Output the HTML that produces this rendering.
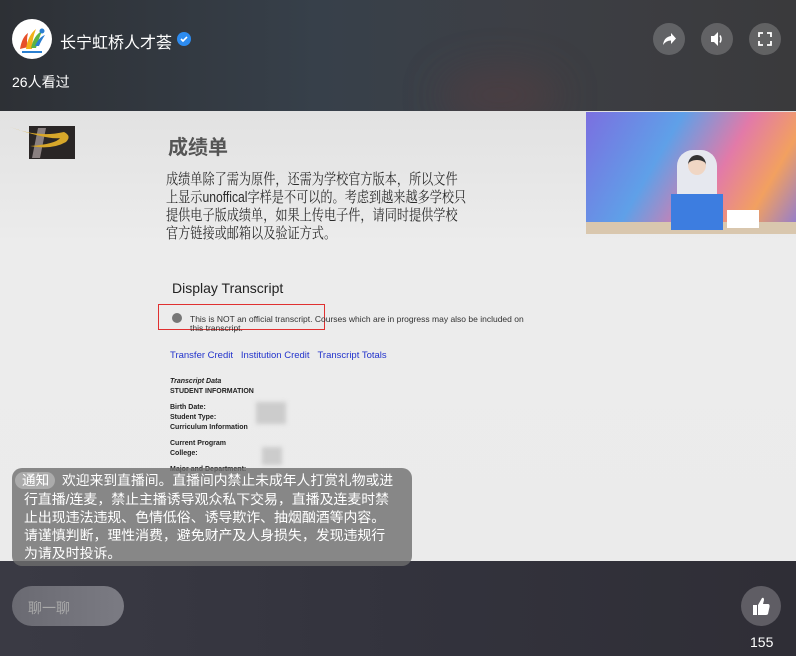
<!DOCTYPE html>
<html><head><meta charset="utf-8"><style>
*{margin:0;padding:0;box-sizing:border-box}
body{width:796px;height:656px;overflow:hidden;position:relative;font-family:"Liberation Sans","Noto Sans CJK SC",sans-serif;background:#2f2f37}
.top{position:absolute;left:0;top:0;width:796px;height:111px;background:linear-gradient(90deg,#2d3035 0%,#37404a 40%,#3d3f45 65%,#3a3a3c 100%)}
.glow{position:absolute;left:440px;top:70px;width:120px;height:50px;border-radius:50%;background:rgba(110,60,60,.3);filter:blur(20px)}
.bot{position:absolute;left:0;top:561px;width:796px;height:95px;background:linear-gradient(90deg,#3a3a44,#33333d 50%,#2f2e36)}
.slide{position:absolute;left:0;top:111px;width:796px;height:450px;background:linear-gradient(#e2e2e2,#ececec 30%,#ebebeb)}
.circ{position:absolute;width:32px;height:32px;border-radius:50%;background:rgba(255,255,255,.2)}
.t{position:absolute;white-space:nowrap}
</style></head><body>
<div class="top"><div class="glow"></div></div>
<div style="position:absolute;left:12px;top:19px;width:40px;height:40px;border-radius:50%;background:#fff;overflow:hidden">
<svg width="40" height="40"><path d="M8 30 Q10 18 16 14 Q14 22 16 28Z" fill="#e7502a"/><path d="M14 30 Q16 16 24 10 Q20 20 20 30Z" fill="#f2b21a"/><path d="M19 29 Q22 16 30 12 Q26 22 24 29Z" fill="#5bb344"/><path d="M23 27 Q27 18 33 16 Q29 22 27 27Z" fill="#2a7fd0"/><circle cx="30" cy="12" r="2.5" fill="#2a7fd0"/><rect x="10" y="32" width="20" height="2" fill="#2a7fd0"/></svg></div>
<div class="t" style="left:60px;top:29px;color:#fff;font-size:16px">长宁虹桥人才荟</div>
<svg style="position:absolute;left:177px;top:32px" width="14" height="14"><circle cx="7" cy="7" r="7" fill="#2d8cf0"/><path d="M4 7l2 2 4-4" stroke="#fff" stroke-width="1.6" fill="none"/></svg>
<div class="t" style="left:12px;top:72px;color:#fff;font-size:14px">26人看过</div>
<div class="circ" style="left:653px;top:23px"></div>
<svg style="position:absolute;left:653px;top:23px" width="32" height="32"><path d="M10 22 Q11 14 18 13 V10 L23 15.5 L18 21 V17.5 Q13 17.5 10 22Z" fill="#fff"/></svg>
<div class="circ" style="left:701px;top:23px"></div>
<svg style="position:absolute;left:701px;top:23px" width="32" height="32"><path d="M10 13h3l4-4v14l-4-4h-3z" fill="#fff"/><path d="M19 12.5q2 3.5 0 7" stroke="#fff" stroke-width="1.5" fill="none"/></svg>
<div class="circ" style="left:749px;top:23px"></div>
<svg style="position:absolute;left:749px;top:23px" width="32" height="32" stroke="#fff" stroke-width="1.8" fill="none"><path d="M10 14v-4h4M18 10h4v4M22 18v4h-4M14 22h-4v-4"/></svg>
<div class="slide"></div>
<div class="bot"></div>
<svg style="position:absolute;left:8px;top:124px" width="72" height="38"><rect x="21" y="2" width="46" height="33" fill="#2a2626"/><path d="M30 4 L38 4 L32 34 L24 34Z" fill="#8a8080"/><path d="M2 3 Q30 14 56 8 Q64 12 58 18 Q44 26 22 22 Q48 20 52 14 Q40 16 2 3Z" fill="#d7a72a"/></svg>
<div class="t" style="left:168px;top:131px;font-size:20px;font-weight:bold;color:#555">成绩单</div>
<div class="t" style="left:166px;top:171px;font-family:'Liberation Serif','Noto Serif CJK SC',serif;font-size:15px;line-height:18px;color:#2a2a2a;transform:scaleX(0.81);transform-origin:0 0">成绩单除了需为原件，还需为学校官方版本，所以文件<br>上显示<span style="font-family:'Liberation Sans',sans-serif">unoffical</span>字样是不可以的。考虑到越来越多学校只<br>提供电子版成绩单，如果上传电子件，请同时提供学校<br>官方链接或邮箱以及验证方式。</div>
<div class="t" style="left:172px;top:280px;font-size:14px;color:#222">Display Transcript</div>
<div style="position:absolute;left:158px;top:304px;width:167px;height:26px;border:1.5px solid #e03030"></div>
<div style="position:absolute;left:172px;top:313px;width:10px;height:10px;border-radius:50%;background:#777"></div>
<div class="t" style="left:190px;top:314px;font-size:8.5px;color:#333">This is NOT an official transcript. Courses which are in progress may also be included on</div>
<div class="t" style="left:190px;top:323px;font-size:8.5px;color:#333">this transcript.</div>
<div class="t" style="left:170px;top:350px;font-size:9.5px;color:#2233cc">Transfer Credit&nbsp;&nbsp;&nbsp;Institution Credit&nbsp;&nbsp;&nbsp;Transcript Totals</div>
<div style="position:absolute;left:170px;top:377px;font-size:7px;font-weight:bold;color:#222;line-height:10px">
<i>Transcript Data</i><br>STUDENT INFORMATION<br><div style="height:6px"></div>Birth Date:<br>Student Type:<br>Curriculum Information<br><div style="height:6px"></div>Current Program<br>College:<br><div style="height:6px"></div>Major and Department:</div>
<div style="position:absolute;left:256px;top:402px;width:30px;height:22px;background:#ccc;filter:blur(2px)"></div>
<div style="position:absolute;left:262px;top:447px;width:20px;height:18px;background:#ccc;filter:blur(2px)"></div>
<div style="position:absolute;left:586px;top:112px;width:210px;height:122px;background:linear-gradient(120deg,#7b6fe0,#5fa0e8 35%,#e27aa8 60%,#f2a060 80%,#8a7ad8)"></div>
<div style="position:absolute;left:586px;top:222px;width:210px;height:12px;background:#d9c7ae"></div>
<div style="position:absolute;left:677px;top:150px;width:40px;height:50px;border-radius:16px 16px 4px 4px;background:#e6e8ef"></div>
<div style="position:absolute;left:688px;top:155px;width:18px;height:20px;border-radius:50%;background:#f0d6c4;border-top:5px solid #333"></div>
<div style="position:absolute;left:671px;top:194px;width:52px;height:36px;background:#3d7de0"></div>
<div style="position:absolute;left:727px;top:210px;width:32px;height:18px;background:#fff"></div>
<div style="position:absolute;left:12px;top:468px;width:400px;height:98px;border-radius:10px;background:rgba(110,110,110,.8)"></div>
<div style="position:absolute;left:15px;top:472px;width:40px;height:17px;border-radius:9px;background:rgba(255,255,255,.3)"></div>
<div class="t" style="left:22px;top:472px;font-size:13.6px;line-height:18px;color:#fff">通知</div>
<div class="t" style="left:62px;top:472px;font-size:13.8px;line-height:18px;color:#fff">欢迎来到直播间。直播间内禁止未成年人打赏礼物或进</div>
<div class="t" style="left:24px;top:490px;font-size:13.9px;line-height:18px;color:#fff">行直播/连麦，禁止主播诱导观众私下交易，直播及连麦时禁<br>止出现违法违规、色情低俗、诱导欺诈、抽烟酗酒等内容。<br>请谨慎判断，理性消费，避免财产及人身损失，发现违规行<br>为请及时投诉。</div>
<div style="position:absolute;left:12px;top:586px;width:112px;height:40px;border-radius:20px;background:linear-gradient(90deg,#6a6a72,#7b7b83)"></div>
<div class="t" style="left:28px;top:598px;font-size:14px;color:#aaa">聊一聊</div>
<div style="position:absolute;left:741px;top:586px;width:40px;height:40px;border-radius:50%;background:#5f5d64"></div>
<svg style="position:absolute;left:741px;top:586px" width="40" height="40"><rect x="12" y="19" width="4" height="10" fill="#fff"/><path d="M17 19 L21 12 Q23 11 23 14 L22 18 H27 Q29 18 28.5 21 L27 28 Q26.5 29 25 29 H17Z" fill="#fff"/></svg>
<div class="t" style="left:750px;top:634px;font-size:14px;color:#fff">155</div>
</body></html>
